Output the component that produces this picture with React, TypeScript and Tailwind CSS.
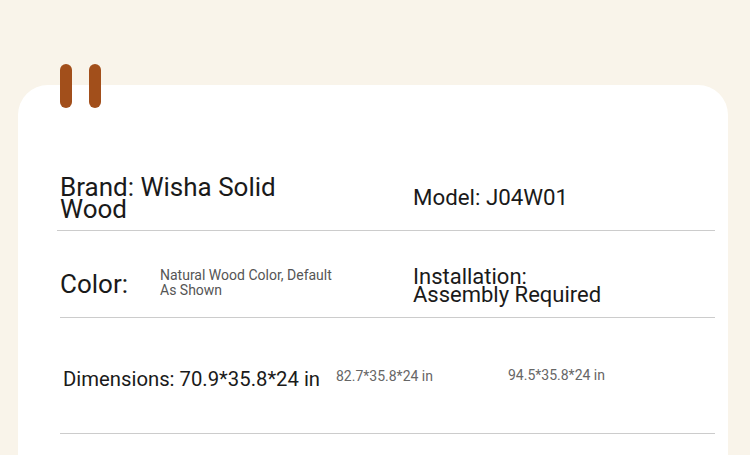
import React from 'react';

const font = { fontFamily: 'Roboto, "Liberation Sans", sans-serif' };

const App: React.FC = () => {
  return (
    <div className="relative h-[455px] w-[750px] overflow-hidden bg-[#f9f4ea]" style={font}>
      {/* binder tabs */}
      <div className="absolute left-[60px] top-[64px] z-10 h-[44px] w-[12px] rounded-full bg-[#a24f1b]" />
      <div className="absolute left-[89px] top-[64px] z-10 h-[44px] w-[12px] rounded-full bg-[#a24f1b]" />

      <div className="ml-[18px] mt-[85px] h-[400px] w-[710px] rounded-t-[30px] bg-white">
        {/* row 1 */}
        <div className="flex h-[145px] items-start pl-[42px]">
          <div className="mt-[91px] w-[353px]">
            <p className="w-[250px] text-[26px] leading-[22px] text-[#1a1a1a]">Brand: Wisha Solid Wood</p>
          </div>
          <p className="mt-[99px] text-[22.3px] leading-[26px] text-[#1a1a1a]">Model: J04W01</p>
        </div>
        <div className="ml-[39px] h-px w-[658px] bg-[#cccccc]" />

        {/* row 2 */}
        <div className="flex h-[86px] items-start pl-[42px]">
          <p className="mt-[38px] w-[100px] text-[26px] leading-[30px] text-[#1a1a1a]">Color:</p>
          <p className="mt-[37px] w-[253px] text-[14px] leading-[15px] text-[#555]">
            Natural Wood Color, Default
            <br />
            As Shown
          </p>
          <p className="mt-[37px] text-[22px] leading-[18px] text-[#1a1a1a]">
            Installation:
            <br />
            Assembly Required
          </p>
        </div>
        <div className="ml-[42px] h-px w-[655px] bg-[#cccccc]" />

        {/* row 3 */}
        <div className="flex h-[115px] items-start pl-[45px]">
          <p className="mt-[49px] w-[273px] text-[20.3px] leading-[24px] text-[#1a1a1a]">Dimensions: 70.9*35.8*24 in</p>
          <p className="mt-[50px] w-[172px] text-[14px] leading-[16px] text-[#666]">82.7*35.8*24 in</p>
          <p className="mt-[49px] text-[14px] leading-[16px] text-[#666]">94.5*35.8*24 in</p>
        </div>
        <div className="ml-[42px] h-px w-[655px] bg-[#cccccc]" />
      </div>
    </div>
  );
};

export default App;
